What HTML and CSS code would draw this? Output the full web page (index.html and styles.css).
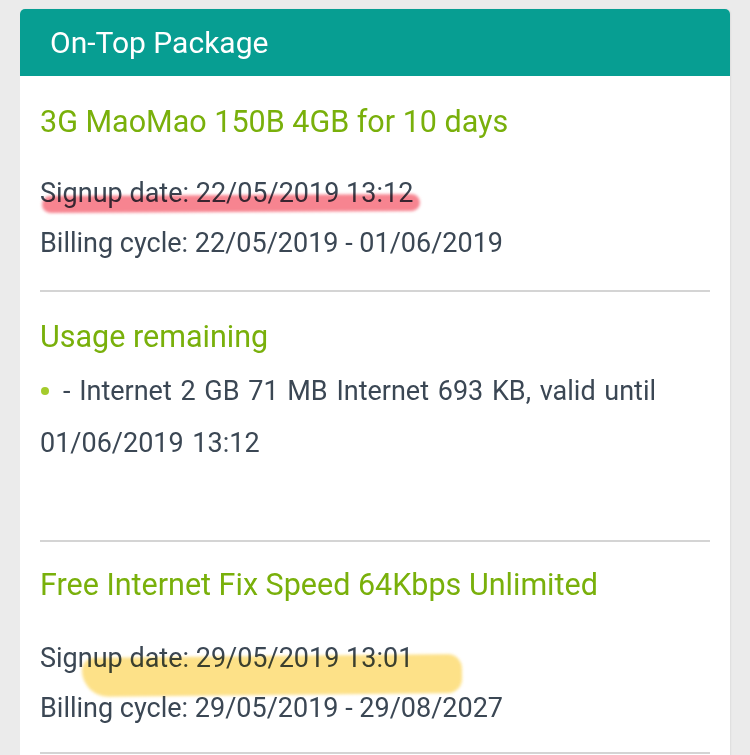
FILE: index.html
```
<!DOCTYPE html>
<html>
<head>
<meta charset="utf-8">
<link rel="stylesheet" href="styles.css">
</head>
<body>
<div class="card">
  <div class="card-header">On-Top Package</div>
  <div class="section s1">
    <div class="title">3G MaoMao 150B 4GB for 10 days</div>
    <div class="line mark-wrap">Signup date: 22/05/2019 13:12<span class="mark pink"></span></div>
    <div class="line">Billing cycle: 22/05/2019 - 01/06/2019</div>
  </div>
  <div class="section s2">
    <div class="title">Usage remaining</div>
    <ul class="usage">
      <li>- Internet 2 GB 71 MB Internet 693 KB, valid until 01/06/2019 13:12</li>
    </ul>
  </div>
  <div class="section s3">
    <div class="title">Free Internet Fix Speed 64Kbps Unlimited</div>
    <div class="line mark-wrap">Signup date: 29/05/2019 13:01<span class="mark yellow"></span></div>
    <div class="line">Billing cycle: 29/05/2019 - 29/08/2027</div>
  </div>
</div>
</body>
</html>
```
FILE: styles.css
```
html, body {
  margin: 0;
  padding: 0;
  background: #ebebeb;
  font-family: Roboto, "Liberation Sans", sans-serif;
}
.card {
  margin: 9px 20px 0;
  background: #fff;
  border-radius: 5px 5px 0 0;
  box-shadow: 1px 0 2px rgba(0,0,0,0.06);
  overflow: hidden;
  height: 760px;
}
.card-header {
  background: #079e92;
  color: #fff;
  height: 67px;
  line-height: 67px;
  padding-left: 30px;
  font-size: 30px;
}
.section {
  margin: 0 20px;
  border-bottom: 2px solid #d4d4d4;
}
.title {
  color: #79b00b;
  font-size: 30.5px;
  line-height: 40px;
}
.line {
  color: #3b4754;
  font-size: 27px;
  line-height: 50px;
}
.s1 { padding-top: 26px; padding-bottom: 22px; }
.s1 .title { margin-bottom: 26px; }
.s2 { padding-top: 25px; padding-bottom: 71px; }
.s3 { padding-top: 23px; padding-bottom: 19px; }
.s3 .title { margin-bottom: 28px; }
.usage {
  margin: 8px 0 0;
  padding: 0;
  list-style: none;
  color: #3b4754;
  font-size: 27px;
  line-height: 52px;
  word-spacing: 2px;
}
.usage li::before {
  content: "";
  display: inline-block;
  width: 8px;
  height: 8px;
  border-radius: 50%;
  background: #a4cb2c;
  vertical-align: middle;
  margin: 0 14px 4px 1px;
}
.mark-wrap { position: relative; }
.mark {
  position: absolute;
  border-radius: 9px;
  mix-blend-mode: multiply;
  filter: blur(1.5px);
}
.mark.pink {
  left: 2px;
  width: 378px;
  top: 27px;
  height: 17px;
  background: rgba(246, 110, 125, 0.85);
  transform: rotate(-0.3deg);
}
.mark.yellow {
  left: 42px;
  width: 380px;
  top: 23px;
  height: 39px;
  border-radius: 14px 16px 16px 30px;
  background: rgba(253, 220, 115, 0.85);
  transform: rotate(-0.6deg);
}
```
